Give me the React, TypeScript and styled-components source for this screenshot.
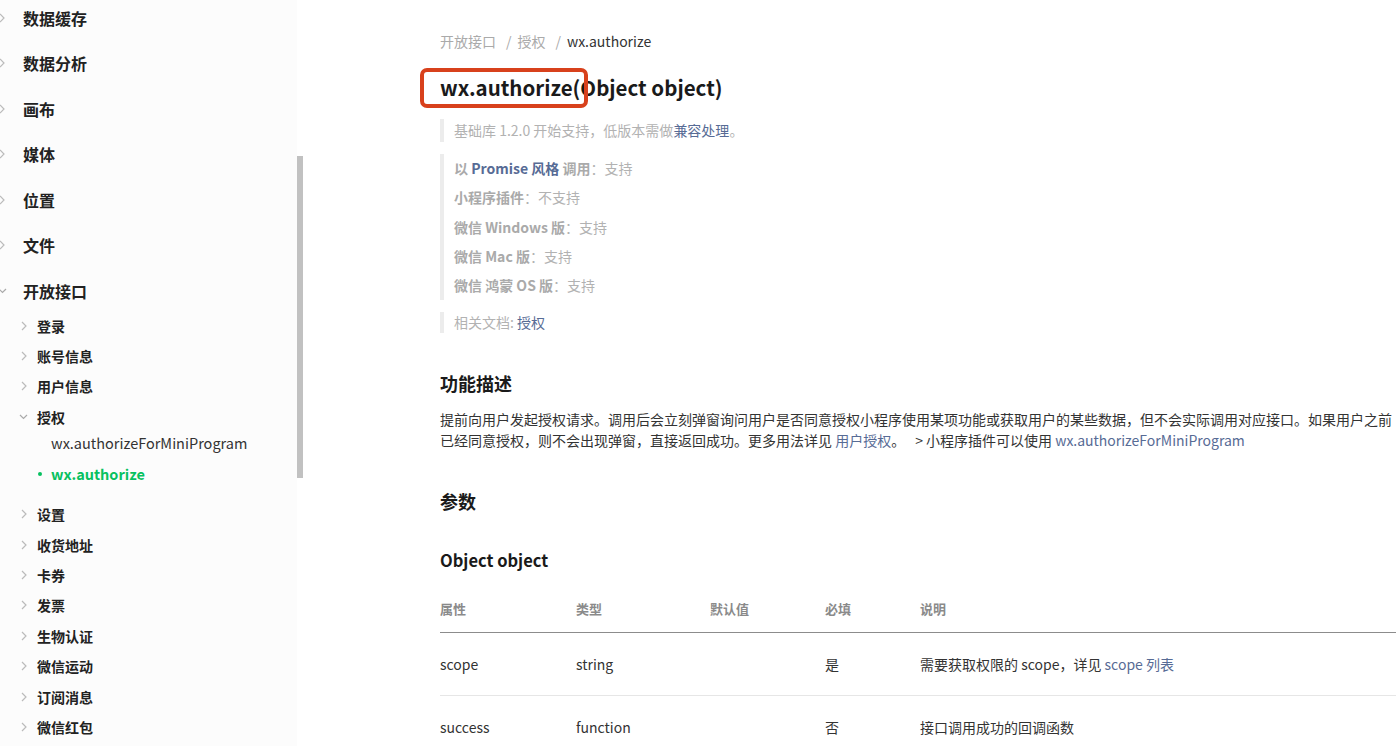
import React from "react";
import styled, { createGlobalStyle } from "styled-components";

const Global = createGlobalStyle`
  html, body { margin: 0; padding: 0; background: #fff; overflow: hidden; }
  body { font-family: "Noto Sans CJK SC", "Noto Sans", sans-serif; color: #333; }
  * { box-sizing: border-box; }
`;

const Page = styled.div`
  display: flex;
  width: 1396px;
  height: 746px;
  overflow: hidden;
`;

const Sidebar = styled.nav`
  width: 297px;
  flex: none;
  background: #fcfcfc;
  overflow: hidden;
`;

const ScrollTrack = styled.div`
  width: 7px;
  flex: none;
  padding-top: 156px;
`;

const ScrollThumb = styled.div`
  width: 6px;
  height: 322px;
  background: #c1c1c1;
`;

const NavList = styled.ul<{ $mt?: number; $mb?: number }>`
  list-style: none;
  margin: ${(p) => p.$mt ?? 0}px 0 ${(p) => p.$mb ?? 0}px 0;
  padding: 0;
`;

const TopItem = styled.li`
  height: 45.5px;
  display: flex;
  align-items: center;
  font-size: 16px;
  font-weight: 700;
  color: #222;
`;

const SubItem = styled.li`
  height: 30.4px;
  display: flex;
  align-items: center;
  font-size: 14px;
  font-weight: 700;
  color: #222;
`;

const LeafItem = styled.li<{ $active?: boolean }>`
  height: 31px;
  display: flex;
  align-items: center;
  padding-left: ${(p) => (p.$active ? 38 : 51)}px;
  font-size: 14.5px;
  font-weight: ${(p) => (p.$active ? 700 : 400)};
  color: ${(p) => (p.$active ? "#07c160" : "#333")};
`;

const Bullet = styled.span`
  width: 4px;
  height: 4px;
  border-radius: 50%;
  background: #07c160;
  margin-right: 9px;
`;

const Chevron = styled.span<{ $x: number; $w: number }>`
  display: inline-flex;
  align-items: center;
  justify-content: flex-start;
  margin-left: ${(p) => p.$x}px;
  width: ${(p) => p.$w}px;
  flex: none;
`;

const Arrow = ({ open }: { open?: boolean }) =>
  open ? (
    <svg width="9" height="6" viewBox="0 0 9 6">
      <path d="M1 1l3.5 3.5L8 1" fill="none" stroke="#aaa" strokeWidth="1.2" />
    </svg>
  ) : (
    <svg width="6" height="10" viewBox="0 0 6 10">
      <path d="M1 1l4 4-4 4" fill="none" stroke="#bbb" strokeWidth="1.2" />
    </svg>
  );

const Main = styled.main`
  flex: none;
  width: 960px;
  margin-left: 136px;
  padding-top: 31px;
`;

const Breadcrumb = styled.div`
  font-size: 14px;
  line-height: 20px;
  display: flex;
`;

const Crumb = styled.span<{ $current?: boolean }>`
  color: ${(p) => (p.$current ? "#333" : "#aaa")};
`;

const Sep = styled.span`
  color: #aaa;
  margin: 0 6px 0 10px;
`;

const TitleWrap = styled.div`
  position: relative;
  margin-top: 21px;
`;

const Title = styled.h1`
  margin: 0;
  font-size: 20.5px;
  line-height: 30px;
  font-weight: 700;
  color: #1a1a1a;
`;

const Annotation = styled.div`
  position: absolute;
  left: -20px;
  top: -4px;
  width: 168px;
  height: 40px;
  border: 4px solid #d8411c;
  border-radius: 7px;
`;

const Note = styled.div<{ $mt: number; $pad: number }>`
  margin-top: ${(p) => p.$mt}px;
  border-left: 4px solid #ececec;
  padding: ${(p) => p.$pad}px 0 ${(p) => p.$pad}px 10px;
  font-size: 14px;
  color: #b2b2b2;
`;

const NoteLine = styled.div<{ $h: number }>`
  line-height: ${(p) => p.$h}px;
`;

const Strong = styled.b`
  font-weight: 700;
  color: #aaa;
`;

const Link = styled.a<{ $bold?: boolean }>`
  color: #576b95;
  text-decoration: none;
  font-weight: ${(p) => (p.$bold ? 700 : 400)};
`;

const H2 = styled.h2<{ $mt: number }>`
  margin: ${(p) => p.$mt}px 0 0;
  font-size: 18px;
  line-height: 26px;
  font-weight: 700;
  color: #1a1a1a;
`;

const H3 = styled.h3<{ $mt: number }>`
  margin: ${(p) => p.$mt}px 0 0;
  font-size: 16.5px;
  line-height: 24px;
  font-weight: 700;
  color: #1a1a1a;
`;

const Para = styled.p`
  margin: 13px 0 0;
  font-size: 14px;
  line-height: 21px;
  color: #333;
`;

const Gap = styled.span`
  display: inline-block;
  width: 10px;
`;

const Table = styled.table`
  margin-top: 13px;
  width: 960px;
  border-collapse: collapse;
  font-size: 14px;
`;

const Th = styled.th<{ $w?: number }>`
  text-align: left;
  font-weight: 700;
  font-size: 13px;
  color: #8a8a8a;
  height: 47px;
  padding: 0;
  width: ${(p) => (p.$w ? `${p.$w}px` : "auto")};
  border-bottom: 1px solid #8c8c8c;
`;

const Td = styled.td`
  height: 63px;
  padding: 0;
  color: #333;
  border-bottom: 1px solid #e6e6e6;
`;

const topItems = ["数据缓存", "数据分析", "画布", "媒体", "位置", "文件"];
const subBefore = ["登录", "账号信息", "用户信息"];
const subAfter = ["设置", "收货地址", "卡券", "发票", "生物认证", "微信运动", "订阅消息", "微信红包"];

export default function App() {
  return (
    <>
      <Global />
      <Page>
        <Sidebar>
          <NavList $mt={-5}>
            {topItems.map((t) => (
              <TopItem key={t}>
                <Chevron $x={-1} $w={24}>
                  <Arrow />
                </Chevron>
                {t}
              </TopItem>
            ))}
            <TopItem>
              <Chevron $x={-2} $w={25}>
                <Arrow open />
              </Chevron>
              开放接口
            </TopItem>
          </NavList>
          <NavList $mt={-3}>
            {subBefore.map((t) => (
              <SubItem key={t}>
                <Chevron $x={21} $w={16}>
                  <Arrow />
                </Chevron>
                {t}
              </SubItem>
            ))}
            <SubItem>
              <Chevron $x={19} $w={18}>
                <Arrow open />
              </Chevron>
              授权
            </SubItem>
          </NavList>
          <NavList $mt={-5} $mb={10}>
            <LeafItem>wx.authorizeForMiniProgram</LeafItem>
            <LeafItem $active>
              <Bullet />
              wx.authorize
            </LeafItem>
          </NavList>
          <NavList>
            {subAfter.map((t) => (
              <SubItem key={t}>
                <Chevron $x={21} $w={16}>
                  <Arrow />
                </Chevron>
                {t}
              </SubItem>
            ))}
          </NavList>
        </Sidebar>
        <ScrollTrack>
          <ScrollThumb />
        </ScrollTrack>
        <Main>
          <Breadcrumb>
            <Crumb>开放接口</Crumb>
            <Sep>/</Sep>
            <Crumb>授权</Crumb>
            <Sep>/</Sep>
            <Crumb $current>wx.authorize</Crumb>
          </Breadcrumb>
          <TitleWrap>
            <Title>wx.authorize(Object object)</Title>
            <Annotation />
          </TitleWrap>
          <Note $mt={17} $pad={1}>
            <NoteLine $h={21}>
              基础库 1.2.0 开始支持，低版本需做<Link>兼容处理</Link>。
            </NoteLine>
          </Note>
          <Note $mt={12} $pad={0}>
            <NoteLine $h={29.3}>
              <Strong>以 </Strong>
              <Link $bold>Promise 风格</Link>
              <Strong> 调用</Strong>：支持
            </NoteLine>
            <NoteLine $h={29.3}>
              <Strong>小程序插件</Strong>：不支持
            </NoteLine>
            <NoteLine $h={29.3}>
              <Strong>微信 Windows 版</Strong>：支持
            </NoteLine>
            <NoteLine $h={29.3}>
              <Strong>微信 Mac 版</Strong>：支持
            </NoteLine>
            <NoteLine $h={29.3}>
              <Strong>微信 鸿蒙 OS 版</Strong>：支持
            </NoteLine>
          </Note>
          <Note $mt={12} $pad={0}>
            <NoteLine $h={21}>
              相关文档: <Link>授权</Link>
            </NoteLine>
          </Note>
          <H2 $mt={37}>功能描述</H2>
          <Para>
            提前向用户发起授权请求。调用后会立刻弹窗询问用户是否同意授权小程序使用某项功能或获取用户的某些数据，但不会实际调用对应接口。如果用户之前已经同意授权，则不会出现弹窗，直接返回成功。更多用法详见 <Link>用户授权</Link>。<Gap />&gt; 小程序插件可以使用 <Link>wx.authorizeForMiniProgram</Link>
          </Para>
          <H2 $mt={37}>参数</H2>
          <H3 $mt={34}>Object object</H3>
          <Table>
            <thead>
              <tr>
                <Th $w={136}>属性</Th>
                <Th $w={134}>类型</Th>
                <Th $w={115}>默认值</Th>
                <Th $w={95}>必填</Th>
                <Th>说明</Th>
              </tr>
            </thead>
            <tbody>
              <tr>
                <Td>scope</Td>
                <Td>string</Td>
                <Td></Td>
                <Td>是</Td>
                <Td>
                  需要获取权限的 scope，详见 <Link>scope 列表</Link>
                </Td>
              </tr>
              <tr>
                <Td>success</Td>
                <Td>function</Td>
                <Td></Td>
                <Td>否</Td>
                <Td>接口调用成功的回调函数</Td>
              </tr>
            </tbody>
          </Table>
        </Main>
      </Page>
    </>
  );
}
